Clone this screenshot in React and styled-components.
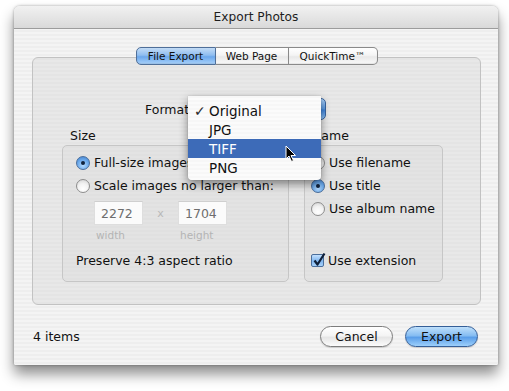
import React from 'react';
import styled, { createGlobalStyle, css } from 'styled-components';

const GlobalStyle = createGlobalStyle`
  html, body {
    margin: 0;
    padding: 0;
    background: #ffffff;
  }
  body {
    font-family: "DejaVu Sans", "Liberation Sans", sans-serif;
    font-size: 12.5px;
    color: #111;
  }
`;

const stripes = (a, b) => css`
  background: repeating-linear-gradient(180deg, ${a} 0px, ${a} 2px, ${b} 2px, ${b} 4px);
`;

const Stage = styled.div`
  width: 509px;
  height: 391px;
  padding: 6px 0 0 14px;
  box-sizing: border-box;
`;

const Window = styled.div`
  width: 484px;
  height: 359px;
  border-radius: 6px 6px 2px 2px;
  box-shadow: 0 9px 14px rgba(0, 0, 0, 0.45), 0 0 3px rgba(0, 0, 0, 0.35);
  display: flex;
  flex-direction: column;
  overflow: hidden;
  ${stripes('#eeeeee', '#f4f4f4')}
`;

const TitleBar = styled.div`
  height: 22px;
  flex: none;
  display: flex;
  align-items: center;
  justify-content: center;
  font-size: 12.2px;
  color: #1d1d1d;
  border-bottom: 1px solid #9c9c9c;
  background: linear-gradient(180deg, #f1f1f1 0%, #e3e3e3 60%, #d9d9d9 100%);
`;

const Body = styled.div`
  flex: 1;
  display: flex;
  flex-direction: column;
  padding: 18px 17px 0 18px;
`;

const TabRow = styled.div`
  display: flex;
  justify-content: center;
  position: relative;
  z-index: 2;
`;

const Tab = styled.div`
  height: 16px;
  display: flex;
  align-items: center;
  justify-content: center;
  width: ${(p) => p.$w}px;
  font-size: 10.5px;
  color: #111;
  border: 1px solid #8a8a8a;
  border-left-width: ${(p) => (p.$first ? 1 : 0)}px;
  border-radius: ${(p) => (p.$first ? '5px 0 0 5px' : p.$last ? '0 5px 5px 0' : '0')};
  background: ${(p) =>
    p.$active
      ? 'linear-gradient(180deg, #c3dcf6 0%, #8fbdf0 45%, #6ba7ec 55%, #a9d2fb 100%)'
      : 'linear-gradient(180deg, #ffffff 0%, #f4f4f4 45%, #e8e8e8 55%, #fafafa 100%)'};
  border-color: ${(p) => (p.$active ? '#4f6f99' : '#8a8a8a')};
  box-shadow: inset 0 -1px 1px rgba(0, 0, 0, 0.08);
`;

const Panel = styled.div`
  margin-top: -8px;
  height: 248px;
  box-sizing: border-box;
  border: 1px solid #c2c2c2;
  border-radius: 6px;
  padding: 40px 0 0 29px;
  ${stripes('#e4e4e4', '#e8e8e8')}
`;

const FormatRow = styled.div`
  display: flex;
  align-items: center;
  height: 22px;
  padding-left: 83px;
  gap: 4px;
`;

const FormatLabel = styled.span`
  width: 49px;
`;

const PopupWrap = styled.div`
  position: relative;
  width: 128px;
  height: 22px;
`;

const PopupButton = styled.div`
  height: 20px;
  border-radius: 5px;
  border: 1px solid #38649f;
  background: linear-gradient(180deg, #a7cdf6 0%, #5d9de6 50%, #3f86df 55%, #8fc3f7 100%);
`;

const Menu = styled.div`
  position: absolute;
  left: -10px;
  top: -2px;
  width: 133px;
  padding: 5px 0 3px;
  box-sizing: border-box;
  border-radius: 0 0 4px 4px;
  box-shadow: 0 4px 10px rgba(0, 0, 0, 0.45), 0 0 1px rgba(0, 0, 0, 0.4);
  z-index: 5;
  ${stripes('#f7f7f7', '#fbfbfb')}
`;

const MenuItem = styled.div`
  height: 19px;
  display: flex;
  align-items: center;
  padding-left: 21px;
  position: relative;
  font-size: 13.5px;
  color: ${(p) => (p.$hl ? '#ffffff' : '#111')};
  background: ${(p) => (p.$hl ? '#3d6bb8' : 'transparent')};
`;

const Check = styled.span`
  position: absolute;
  left: 6px;
  font-size: 14px;
  color: #2a2a2a;
`;

const Cursor = styled.svg`
  position: absolute;
  left: 97px;
  top: 49px;
`;

const Columns = styled.div`
  display: flex;
  gap: 15px;
  margin-top: 8px;
`;

const Column = styled.div`
  width: ${(p) => p.$w}px;
  display: flex;
  flex-direction: column;
`;

const GroupLabel = styled.div`
  height: 15px;
  line-height: 15px;
  padding-left: ${(p) => p.$indent}px;
  margin-bottom: 2px;
`;

const GroupBox = styled.div`
  height: 137px;
  box-sizing: border-box;
  border: 1px solid #c6c6c6;
  border-radius: 5px;
  padding: 5px 0 0 ${(p) => p.$pad}px;
  display: flex;
  flex-direction: column;
  ${stripes('#e0e0e0', '#e3e3e3')}
`;

const OptionRow = styled.div`
  height: 23px;
  display: flex;
  align-items: center;
  gap: 4px;
  white-space: nowrap;
  margin-top: ${(p) => p.$mt || 0}px;
`;

const RadioDot = styled.span`
  width: 14px;
  height: 14px;
  border-radius: 50%;
  flex: none;
  box-sizing: border-box;
  display: flex;
  align-items: center;
  justify-content: center;
  border: 1px solid ${(p) => (p.$on ? '#4a6e9b' : '#8d8d8d')};
  background: ${(p) =>
    p.$on
      ? 'radial-gradient(circle at 50% 70%, #b5dbff 0%, #6aa8ea 55%, #3d7cc9 100%)'
      : 'radial-gradient(circle at 50% 75%, #ffffff 0%, #f2f2f2 50%, #cfcfcf 100%)'};
  &::after {
    content: '';
    display: ${(p) => (p.$on ? 'block' : 'none')};
    width: 4px;
    height: 4px;
    border-radius: 50%;
    background: #10233d;
  }
`;

const CheckBox = styled.span`
  width: 13px;
  height: 13px;
  flex: none;
  box-sizing: border-box;
  border: 1px solid #4a6e9b;
  border-radius: 2px;
  background: linear-gradient(180deg, #c2e0ff 0%, #7fb5ee 55%, #a8d2fb 100%);
  position: relative;
  svg {
    position: absolute;
    left: 0;
    top: -3px;
  }
`;

const FieldRow = styled.div`
  display: flex;
  align-items: center;
  margin: 4px 0 0 18px;
`;

const Field = styled.div`
  width: 49px;
  height: 24px;
  box-sizing: border-box;
  background: #fbfbfb;
  border: 1px solid #dedede;
  border-top-color: #cfcfcf;
  padding-left: 6px;
  display: flex;
  align-items: center;
  color: #6e6e6e;
`;

const Times = styled.span`
  width: 35px;
  text-align: center;
  color: #b8b8b8;
  font-size: 11px;
`;

const HintRow = styled.div`
  display: flex;
  margin: 4px 0 0 20px;
  height: 14px;
  font-size: 10.5px;
  color: #b4b4b4;
`;

const Hint = styled.span`
  width: ${(p) => p.$w}px;
`;

const Note = styled.div`
  margin-top: 10px;
  height: 15px;
  line-height: 15px;
`;

const Footer = styled.div`
  display: flex;
  align-items: center;
  margin-top: 21px;
  height: 21px;
  padding: 0 3px 0 1px;
`;

const Count = styled.span`
  flex: 1;
`;

const AquaButton = styled.div`
  width: 73px;
  height: 21px;
  box-sizing: border-box;
  border-radius: 11px;
  display: flex;
  align-items: center;
  justify-content: center;
  margin-left: ${(p) => p.$ml || 0}px;
  font-size: 12.5px;
  border: 1px solid ${(p) => (p.$primary ? '#355f98' : '#7d7d7d')};
  background: ${(p) =>
    p.$primary
      ? 'linear-gradient(180deg, #bfe0fb 0%, #86bdf2 45%, #5a9ee9 55%, #9dd0fb 100%)'
      : 'linear-gradient(180deg, #ffffff 0%, #f4f4f4 45%, #e6e6e6 55%, #fbfbfb 100%)'};
  box-shadow: 0 1px 1px rgba(0, 0, 0, 0.15);
`;

function Option({ type = 'radio', on, mt, children }) {
  return (
    <OptionRow $mt={mt}>
      {type === 'radio' ? (
        <RadioDot $on={on} />
      ) : (
        <CheckBox>
          <svg width="14" height="15" viewBox="0 0 14 15">
            <path d="M2.5 8.5 L5.5 12.5 L12.5 1.5" fill="none" stroke="#0e1f38" strokeWidth="2.2" strokeLinejoin="round" />
          </svg>
        </CheckBox>
      )}
      <span>{children}</span>
    </OptionRow>
  );
}

export default function App() {
  return (
    <>
      <GlobalStyle />
      <Stage>
        <Window>
          <TitleBar>Export Photos</TitleBar>
          <Body>
            <TabRow>
              <Tab $w={78} $first $active>File Export</Tab>
              <Tab $w={72}>Web Page</Tab>
              <Tab $w={88} $last>QuickTime™</Tab>
            </TabRow>
            <Panel>
              <FormatRow>
                <FormatLabel>Format:</FormatLabel>
                <PopupWrap>
                  <PopupButton />
                  <Menu>
                    <MenuItem><Check>✓</Check>Original</MenuItem>
                    <MenuItem>JPG</MenuItem>
                    <MenuItem $hl>TIFF</MenuItem>
                    <MenuItem>PNG</MenuItem>
                    <Cursor width="12" height="18" viewBox="0 0 12 18">
                      <path d="M1 1 L1 14 L4 11 L6.5 16.5 L8.5 15.5 L6 10.5 L10.5 10.5 Z" fill="#000" stroke="#fff" strokeWidth="1" />
                    </Cursor>
                  </Menu>
                </PopupWrap>
              </FormatRow>
              <Columns>
                <Column $w={227}>
                  <GroupLabel $indent={8}>Size</GroupLabel>
                  <GroupBox $pad={13}>
                    <Option on>Full-size images</Option>
                    <Option>Scale images no larger than:</Option>
                    <FieldRow>
                      <Field>2272</Field>
                      <Times>x</Times>
                      <Field>1704</Field>
                    </FieldRow>
                    <HintRow>
                      <Hint $w={84}>width</Hint>
                      <Hint $w={60}>height</Hint>
                    </HintRow>
                    <Note>Preserve 4:3 aspect ratio</Note>
                  </GroupBox>
                </Column>
                <Column $w={139}>
                  <GroupLabel $indent={8}>Name</GroupLabel>
                  <GroupBox $pad={6}>
                    <Option>Use filename</Option>
                    <Option on>Use title</Option>
                    <Option>Use album name</Option>
                    <Option type="checkbox" mt={29}>Use extension</Option>
                  </GroupBox>
                </Column>
              </Columns>
            </Panel>
            <Footer>
              <Count>4 items</Count>
              <AquaButton>Cancel</AquaButton>
              <AquaButton $primary $ml={12}>Export</AquaButton>
            </Footer>
          </Body>
        </Window>
      </Stage>
    </>
  );
}
